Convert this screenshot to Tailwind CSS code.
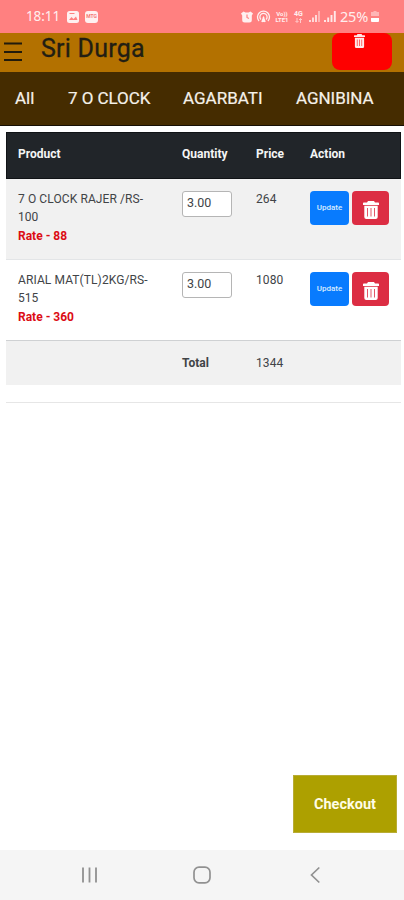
<!DOCTYPE html>
<html lang="en">
<head>
<meta charset="utf-8">
<title>Sri Durga</title>
<script src="https://cdn.jsdelivr.net/npm/@tailwindcss/browser@4"></script>
</head>
<body class="bg-white">
<svg class="hidden">
  <symbol id="trash" viewBox="0 0 16 18"><path fill="currentColor" fill-rule="evenodd" d="M5 0h6l1 1.500h3.200q.8 0 .8.8v1.700H0V2.300q0-.8.8-.8H4zM1.300 4.800h13.400V16q0 2-2 2H3.300q-2 0-2-2zM4.200 7v8.500h.8V7zm3.400 0v8.500h.8V7zm3.400 0v8.500h.8V7z"/></symbol>
</svg>
<div class="flex h-[900px] w-[404px] flex-col overflow-hidden bg-white font-['Roboto',sans-serif] text-[#414447]">
  <div class="flex h-[33px] shrink-0 items-center bg-[#ff8080] pl-[26px] text-[14px] text-[#ffeeee]">
    <span class="w-[41px] whitespace-nowrap font-['Noto_Sans',sans-serif] text-[13.500px] tracking-[-0.1px]">18:11</span>
    <svg class="h-[12px] w-[12px]" viewBox="0 0 12 12"><rect width="12" height="12" rx="2.500" fill="#fff0f0"/><path d="M2 9l2.500-3 2 2L9 5.500 10.500 9z" fill="#ff8080"/><path d="M2.500 2.500h5" stroke="#ff8080"/></svg>
    <span class="ml-[6px] flex h-[12px] w-[13px] items-center justify-center rounded-[3px] bg-[#fff0f0] text-[5px] font-bold text-[#f47777]">MTG</span>
    <svg class="ml-[143px] h-[12px] w-[12px]" viewBox="0 0 12 12"><path d="M0 2.500L2.500.5l2 1h3l2-1L12 2.500 10.800 4.500v4.500q0 2.500-2.500 2.500H3.700Q1.200 11.500 1.200 9V4.500z" fill="#fff0f0"/><path d="M6 3.500v3l2 1" fill="none" stroke="#ff8080" stroke-width="1.200"/></svg>
    <svg class="ml-[3px] h-[13px] w-[15px]" viewBox="0 0 15 13" fill="none" stroke="#fff0f0" stroke-width="1.300"><path d="M3 11A6 6 0 1 1 12 11M5 9.500A3.600 3.600 0 1 1 10 9.500"/><path d="M7.500 7v5M6 12l1.500-4L9 12" stroke-width="1.600"/></svg>
    <span class="ml-[3px] flex w-[16px] flex-col items-center text-[6px] leading-[6px] font-bold"><span>Vo))</span><span>LTE1</span></span>
    <span class="ml-[3px] flex w-[11px] flex-col items-center text-[7px] leading-[7px] font-bold"><span>4G</span><svg class="h-[5px] w-[7px]" viewBox="0 0 7 5" fill="none" stroke="#ffe0e0" stroke-width=".8"><path d="M2 0v4M.5 3L2 4.500 3.500 3M5.500 5V1M4 2L5.500.5 7 2"/></svg></span>
    <svg class="ml-[5px] h-[11px] w-[11px]" viewBox="0 0 11 11" stroke="#ffe8e8" stroke-width="1.700"><path d="M1 11V9M4 11V6.500M7 11V4"/><path d="M10 11V0" opacity=".6"/></svg>
    <svg class="ml-[4px] h-[11px] w-[12px]" viewBox="0 0 12 11" stroke="#ffe8e8" stroke-width="1.900"><path d="M1 11V9M4.200 11V6.500M7.500 11V4M10.800 11V0"/></svg>
    <span class="ml-[4px] w-[31px] whitespace-nowrap font-['Noto_Sans',sans-serif] text-[14.500px] tracking-[-0.2px]">25%</span>
    <svg class="h-[11px] w-[8px]" viewBox="0 0 8 11"><path d="M2.500 0h3v1H8v4H0V1h2.500z" fill="#ffb5b5"/><path d="M0 7h8v3q0 1-1 1H1q-1 0-1-1z" fill="#fff"/></svg>
  </div>
  <header class="flex h-[39px] shrink-0 items-start bg-[#b37100]">
    <svg class="mt-[9px] ml-[4px] h-[20px] w-[18px]" viewBox="0 0 18 20" stroke="#211b0c" stroke-width="2"><path d="M0 1.500h18M0 10h18M0 18h18"/></svg>
    <h1 class="ml-[19px] w-[291px] pt-px text-[25px] leading-[30px] tracking-[0.25px] whitespace-nowrap text-[#221e13] [-webkit-text-stroke:0.3px_#221e13]">Sri Durga</h1>
    <button class="flex h-[37px] w-[60px] items-start justify-center rounded-[8px] bg-[#fe0000] pr-[5px] pt-[1px] text-[#ffe8e8]"><svg class="h-[14px] w-[11px]" viewBox="0 0 16 18" preserveAspectRatio="none"><use href="#trash"/></svg></button>
  </header>
  <nav class="flex h-[54px] shrink-0 items-center border-b border-[#171005] bg-[#452c00] pt-px pl-[15px] text-[17px] whitespace-nowrap text-[#f5f1e9] [-webkit-text-stroke:0.2px_#f5f1e9]">
    <a class="w-[53px]">All</a><a class="w-[115px] tracking-[-0.05px]">7 O CLOCK</a><a class="w-[113px]">AGARBATI</a><a class="tracking-[-0.05px]">AGNIBINA</a>
  </nav>
  <main class="mt-[6px] ml-[6px] w-[395px] text-[12px] leading-[18.300px]">
    <div class="grid h-[47px] grid-cols-[164px_74px_54px_1fr] items-center border border-[#101316] bg-[#212529] pb-[2px] pl-[11px] font-bold text-[#f4f5f5]">
      <span>Product</span><span>Quantity</span><span>Price</span><span>Action</span>
    </div>
    <div class="grid h-[81px] grid-cols-[164px_74px_54px_1fr] items-start border-b border-[#e3e5e7] bg-[#f1f1f1] pt-[12px] pl-[12px]">
      <div class="-mt-px"><span class="tracking-[0.1px]">7 O CLOCK RAJER /RS-</span><br>100<br><b class="text-[#dc0c14]">Rate - 88</b></div>
      <div class="flex h-[26px] w-[50px] items-center rounded-[3px] border border-[#b5b5b5] bg-white pb-[2px] pl-[4px] text-[12.500px]">3.00</div>
      <span class="-mt-px tracking-[0.1px]">264</span>
      <div class="flex gap-[3px]"><button class="h-[34px] w-[39px] rounded-[4px] bg-[#087bfe] text-[8px] font-medium text-[#d8ebff]">Update</button><button class="flex h-[34px] w-[37px] items-center justify-center rounded-[4px] bg-[#dc2d43] pt-[3px] text-white"><svg class="h-[18px] w-[16px]"><use href="#trash"/></svg></button></div>
    </div>
    <div class="grid h-[80px] grid-cols-[164px_74px_54px_1fr] items-start bg-white pt-[12px] pl-[12px]">
      <div class="-mt-px"><span class="tracking-[0.1px]">ARIAL MAT(TL)2KG/RS-</span><br>515<br><b class="text-[#dc0c14]">Rate - 360</b></div>
      <div class="flex h-[26px] w-[50px] items-center rounded-[3px] border border-[#b5b5b5] bg-white pb-[2px] pl-[4px] text-[12.500px]">3.00</div>
      <span class="-mt-px tracking-[0.1px]">1080</span>
      <div class="flex gap-[3px]"><button class="h-[34px] w-[39px] rounded-[4px] bg-[#087bfe] text-[8px] font-medium text-[#d8ebff]">Update</button><button class="flex h-[34px] w-[37px] items-center justify-center rounded-[4px] bg-[#dc2d43] pt-[3px] text-white"><svg class="h-[18px] w-[16px]"><use href="#trash"/></svg></button></div>
    </div>
    <div class="grid h-[45px] grid-cols-[164px_74px_54px_1fr] items-center border-t border-[#cfd1d3] bg-[#f1f1f1] pl-[12px]">
      <span></span><b>Total</b><span class="tracking-[0.1px]">1344</span><span></span>
    </div>
    <div class="mt-[17px] border-b border-[#e6e6e6]"></div>
  </main>
  <button class="mt-auto mr-[7px] mb-[17px] flex h-[58px] w-[104px] shrink-0 items-center justify-center self-end border border-[#b8ac35] bg-[#ada000] pt-px text-[14.500px] font-bold text-[#fffde5]">Checkout</button>
  <footer class="flex h-[50px] shrink-0 items-center bg-[#f5f5f5] pl-[81px] text-[#919191]">
    <svg class="h-[18px] w-[17px]" viewBox="0 0 17 18" stroke="currentColor" stroke-width="1.800"><path d="M2 1.500v15M8.500 1.500v15M15 1.500v15"/></svg>
    <svg class="ml-[95px] h-[18px] w-[18px]" viewBox="0 0 18 18" fill="none" stroke="currentColor" stroke-width="1.700"><rect x="1" y="1.200" width="16" height="15.600" rx="5"/></svg>
    <svg class="ml-[99px] h-[18px] w-[10px]" viewBox="0 0 10 18" fill="none" stroke="currentColor" stroke-width="1.700"><path d="M9.300 1.500L1.500 9l7.800 7.500"/></svg>
  </footer>
</div>
</body>
</html>
